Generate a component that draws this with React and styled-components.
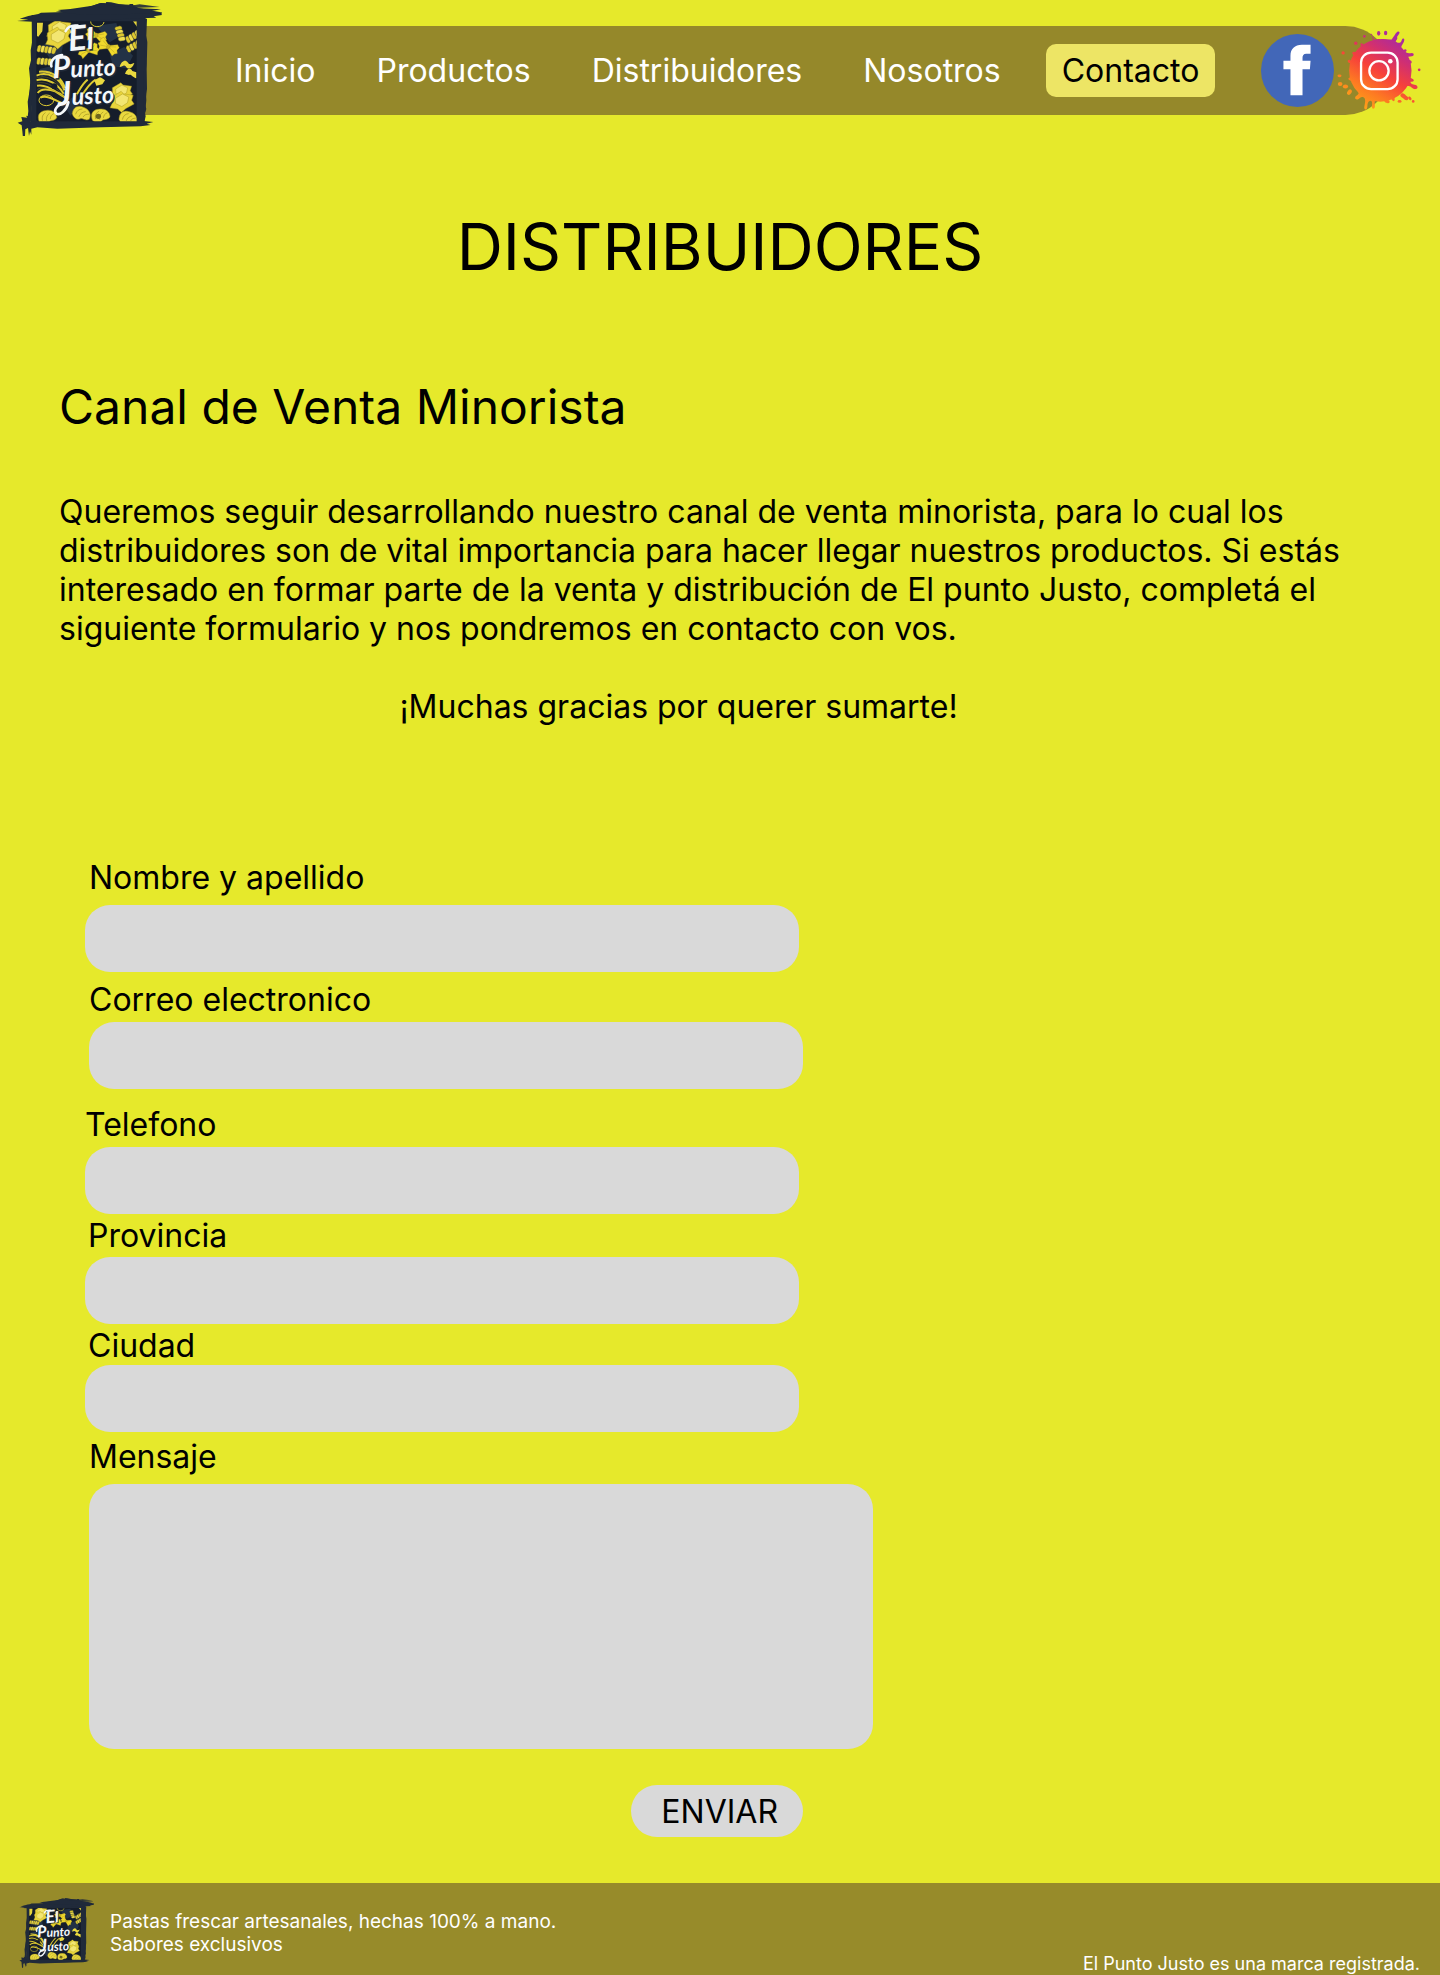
import React from "react";
import styled, { createGlobalStyle } from "styled-components";

const GlobalStyle = createGlobalStyle`
  *, *::before, *::after { box-sizing: border-box; }
  body {
    margin: 0;
    background: #e6e92b;
    color: #000;
    font-family: Inter, "Liberation Sans", sans-serif;
    font-size: 32px;
    line-height: 39px;
  }
`;

const Header = styled.header`
  position: relative;
  padding: 26px 50px 0 100px;
`;

const LogoLink = styled.a`
  position: absolute;
  top: 2px;
  left: 17px;
  z-index: 1;
  display: block;
`;

const LogoSvg = styled.svg`
  display: block;
  width: ${(p) => p.$width}px;
  height: auto;
`;

const Bar = styled.div`
  display: flex;
  align-items: center;
  justify-content: space-between;
  height: 89px;
  padding-left: 135px;
  background: #95882a;
  border-radius: 0 45px 45px 0;
`;

const Nav = styled.nav`
  display: flex;
  align-items: center;
  gap: 61px;
`;

const NavLink = styled.a`
  color: #fff;
  text-decoration: none;
`;

const ActiveLink = styled(NavLink)`
  margin-left: -16px;
  padding: 7px 16px;
  border-radius: 10px;
  background: #ede565;
  color: #000;
`;

const Social = styled.div`
  display: flex;
  align-items: center;
  gap: 3px;
  margin-right: -31px;

  a, svg { display: block; }
`;

const Main = styled.main`
  padding: 93px 90px 46px 59px;
`;

const Title = styled.h1`
  margin: 0;
  padding-left: 31px;
  font-size: 64px;
  font-weight: 400;
  line-height: 77px;
  text-align: center;
`;

const Subtitle = styled.h2`
  margin: 93px 0 56px;
  font-size: 48px;
  font-weight: 400;
  line-height: 58px;
`;

const Text = styled.p`
  margin: 0 0 39px;
`;

const Thanks = styled(Text)`
  padding-right: 52px;
  margin-bottom: 132px;
  text-align: center;
`;

const Form = styled.form`
  display: flex;
  flex-direction: column;
  width: 100%;
  max-width: 814px;
  padding-left: 26px;
`;

const Field = styled.div`
  display: flex;
  flex-direction: column;
  gap: ${(p) => p.$gap}px;
  margin-bottom: ${(p) => p.$after}px;
  padding-left: ${(p) => (p.$inset ? 4 : 0)}px;
`;

const Label = styled.label`
  padding-left: ${(p) => p.$indent}px;
`;

const Input = styled.input`
  width: 100%;
  max-width: 714px;
  height: 67px;
  padding: 0 24px;
  border: 0;
  border-radius: 25px;
  background: #d9d9d9;
  font: inherit;
`;

const Message = styled.textarea`
  display: block;
  width: 100%;
  height: 265px;
  padding: 16px 24px;
  border: 0;
  border-radius: 25px;
  background: #d9d9d9;
  font: inherit;
  resize: none;
`;

const Actions = styled.div`
  display: flex;
  justify-content: flex-end;
  padding-right: 70px;
`;

const Submit = styled.button`
  height: 52px;
  padding: 0 25px 0 30px;
  border: 0;
  border-radius: 26px;
  background: #d9d9d9;
  color: #000;
  font: inherit;
`;

const Footer = styled.footer`
  display: flex;
  justify-content: space-between;
  height: 92px;
  padding: 0 20px 0 19px;
  background: #978b2a;
  color: #fff;
`;

const Brand = styled.div`
  display: flex;
  align-items: center;
  gap: 16px;
  padding-top: 8px;
`;

const Slogan = styled.p`
  margin: 0;
  font-size: 19px;
  line-height: 23px;
`;

const Legal = styled.p`
  align-self: flex-end;
  margin: 0;
  font-size: 18px;
  line-height: 23px;
`;

const INK = "#202a3a";

function Ravioli({ x, y, s = 1 }) {
  return (
    <g transform={`translate(${x} ${y}) scale(${s})`} stroke="#a9981f" strokeWidth="1.5">
      <path d="M0-4l30-18 8 8 30 4-5 16 8 12-26 14-14 12-12-10-24-4 6-14z" fill="#e9d53c" />
      <path d="M12 0l22-14 20 10-4 18-18 12-20-10z" fill="#f3e671" />
    </g>
  );
}

function Fusilli({ x, y, r = 0, n = 5 }) {
  return (
    <g transform={`translate(${x} ${y}) rotate(${r})`}>
      {Array.from({ length: n }, (_, i) => (
        <path
          key={i}
          d={`M${i * 11} 2c4-8 12-6 14 1l-3 12c-3 6-11 5-12-1z`}
          fill={i % 2 ? "#f1df4d" : "#dcc72e"}
          stroke={INK}
          strokeWidth="1.5"
        />
      ))}
    </g>
  );
}

function Bow({ x, y, r = 0 }) {
  return (
    <g transform={`translate(${x} ${y}) rotate(${r})`} stroke="#9b8b1d" strokeWidth="1">
      <path d="M0-4l-24-16-7 8 4 8-6 7 8 7 2 10 23-14 22 15 4-9 7-5-5-8 3-10-8-6z" fill="#f0d92c" />
      <path d="M-22-10L0 0l22-9M-24 6L0 0l24 8" fill="none" />
      <ellipse rx="5" ry="7" fill="#c9b327" />
    </g>
  );
}

function Shell({ x, y, r = 0 }) {
  return (
    <g transform={`translate(${x} ${y}) rotate(${r})`} stroke="#8f801b" strokeWidth="1.5">
      <path d="M-26 12c-4-20 6-32 26-30 18 0 30 12 28 28-10 10-20 2-26 8-8 8-20 4-28-6z" fill="#ead93f" />
      <path d="M-16 10c0-12 4-18 14-22M-4 14c0-12 6-18 14-22M8 10c2-8 6-12 14-14" fill="none" />
    </g>
  );
}

function Logo({ width }) {
  return (
    <LogoSvg $width={width} viewBox="52 5 435 403" role="img" aria-label="El Punto Justo">
      <g fill={INK}>
        <path d="M96 44L436 42 439 90 437 140 440 190 437 240 440 300 433 374 300 379 180 378 92 372 95 320 89 280 92 240 97 150z" />
        <path d="M52 62l34-4-26-3 26-8 30-6 8-4 70-2-20-6 38-3 66-10 26-8 14 1 2-4 14 1 26 6 46 6 14 6 76 14-12 2 4 4-26 4 8 4-50 2-140 6-180 4z" />
        <path d="M168 34l92-12 40-13 14 0 26 8 46 4 4-10 10 0 2 12 82 4-32 6 22 5-100 4-120 2z" />
        <path d="M330 16l90 6 60-2-60-8-14 2-60-3z" opacity=".9" />
        <path d="M65 350l18 2-4-6 16 4-2 14 340-2 28 3-20 5 12 4-30 4-120 3-130 4-60-4-18 4v18l-4-10-3 14-3-24-8 4-1 20-6 6-2-20-2-18-12-8 14-4z" />
        <path d="M434 52l8 4-2 50 3 20-2 80 1 60-6 46 4 14-4 12 2 10-6 26z" />
        <path d="M100 110l-7 40 1 30-6 24 5 50-9 50 2 28-4 36 14-6z" />
      </g>
      <rect x="110" y="63" width="301" height="300" rx="6" fill="#151d2b" />
      <g fill="#27384d" opacity=".8">
        <path d="M128 140l30-36 34 20-8 42-34 8zM290 76l60-8 10 40-30 18zM330 160l44-20 26 26-20 38-40-6zM120 206l40-10-4 26-30 8zM190 310l30-20 16 30-24 26z" />
      </g>
      <svg x="110" y="63" width="301" height="300" viewBox="110 63 301 300">
        <Ravioli x={146} y={78} />
        <Ravioli x={143} y={102} />
        <Bow x={290} y={105} r={12} />
        <Bow x={326} y={139} r={25} />
        <Bow x={266} y={150} r={-16} />
        <Fusilli x={114} y={136} r={8} />
        <Fusilli x={112} y={174} r={4} n={4} />
        <Fusilli x={362} y={76} r={72} n={4} />
        <Fusilli x={376} y={114} r={-32} n={4} />
        <Fusilli x={378} y={142} r={-30} n={4} />
        <path d="M112 67h18l-2 26-12 16-4-2zM400 63h12v16z" fill="#e5d53c" />
        <path d="M273 63a20 15 0 0040 2" fill="none" stroke="#d8c831" strokeWidth="3" />
        <path d="M360 200c4-18 18-24 24-14s12 4 20 2c-6 18-20 22-26 10-6-6-10 2-18 2zM376 220c6-16 16-20 22-8l12 4v18c-12-4-16-14-22-10z" fill="#ead93f" />
        <g fill="none" stroke="#ddca32" strokeWidth="6">
          <path d="M110 226c34-14 72 6 84 44M110 240c34-10 66 14 82 40M112 256c30-6 56 20 82 34M114 278c14-20 60-10 88 20M118 214c40-4 70 20 78 50M122 292c20-10 50 10 76 22" />
          <path d="M230 284c12-20 20-36 34-46M244 290c12-20 24-40 44-52" />
          <ellipse cx="140" cy="300" rx="22" ry="16" strokeWidth="3" />
        </g>
        <g fill="none" stroke="#93841d" strokeWidth="1.2">
          <path d="M110 233c34-12 69 10 83 42M111 248c32-8 61 17 82 37M113 267c22-13 58 5 85 27" />
        </g>
        <circle cx="164" cy="258" r="9" fill="#151d2b" />
        <Ravioli x={338} y={266} s={0.85} />
        <Ravioli x={336} y={294} s={0.95} />
        <path d="M284 240l18-10 14 10-8 12-18 4z" fill="#ead93f" />
        <Shell x={142} y={348} r={-12} />
        <Shell x={246} y={338} r={20} />
        <Shell x={302} y={344} r={-8} />
        <Shell x={386} y={352} r={14} />
        <circle cx="296" cy="348" r="8" fill="#6d651d" />
      </svg>
      <g
        fontFamily="Lato, 'Liberation Sans', sans-serif"
        fontStyle="italic"
        fontWeight="700"
        fontSize="70"
      >
        <g fill={INK} transform="translate(4 4)">
          <text x="208" y="152" transform="rotate(-5 208 152)"><tspan fontSize="104">E</tspan><tspan fontSize="88">l</tspan></text>
          <text x="160" y="234" transform="rotate(-3 160 234)"><tspan fontSize="92">P</tspan>unto</text>
          <text x="176" y="316" transform="rotate(-3 176 316)"><tspan fontSize="100">J</tspan>usto</text>
        </g>
        <g fill="#f4f8fb">
          <text x="208" y="152" transform="rotate(-5 208 152)"><tspan fontSize="104">E</tspan><tspan fontSize="88">l</tspan></text>
          <text x="160" y="234" transform="rotate(-3 160 234)"><tspan fontSize="92">P</tspan>unto</text>
          <text x="176" y="316" transform="rotate(-3 176 316)"><tspan fontSize="100">J</tspan>usto</text>
        </g>
      </g>
      <path d="M198 92c6-12 20-18 36-16M155 198c-4-18 12-32 32-34M206 306c-6 26-26 40-36 34-10-10 2-26 26-34" fill="none" stroke="#f4f8fb" strokeWidth="8" strokeLinecap="round" />
    </LogoSvg>
  );
}

function FacebookIcon() {
  return (
    <svg width="73" height="73" viewBox="125 72 218 218" aria-hidden="true">
      <circle cx="234" cy="181" r="109" fill="#4267b8" />
      <path d="M213 255V177H192V152H213V137C213 116 226 104 247 104H273V131H260C252 131 249 136 249 143V152H273L271 177H249V255Z" fill="#fff" />
    </svg>
  );
}

function InstagramIcon() {
  return (
    <svg width="84" height="83" viewBox="352 55 252 250" aria-hidden="true">
      <defs>
        <linearGradient id="splash" x1="410" y1="290" x2="540" y2="75" gradientUnits="userSpaceOnUse">
          <stop offset="0" stopColor="#ffa617" />
          <stop offset=".25" stopColor="#fd7a22" />
          <stop offset=".5" stopColor="#f7413a" />
          <stop offset=".75" stopColor="#d02f72" />
          <stop offset="1" stopColor="#a32aa8" />
        </linearGradient>
      </defs>
      <g fill="url(#splash)">
        <circle cx="482" cy="180" r="94" />
        <path d="M452 70c5-3 7 3 6 9l2 12c8-5 14-7 22-5 14-2 26 2 36 0 5-6 8-10 13-8 5 3 1 9-3 14 6 6 11 6 16 2l4-9c7-4 8 4 4 11-5 9-9 13-5 18l13 12c7 4 12 2 17 1 8 1 7 9 0 10-8 1-14 1-14 6 2 5 8 4 12 8 5 7-2 11-8 7-7-3-10 1-8 8l8 26c4 10 8 12 14 14 5 5-1 9-7 7-3 5 3 8 11 10 11 2 12 11 4 13-9 2-13-8-22-9-8-1-12 4-16 11l-16 14c-8 5-11 8-10 14 2 8-6 8-8 2-2-5-7-2-11 0-4 3-1 9-6 9s-4-6-10-6c-10 1-18-2-24 0-3 7 2 17-2 23-5 4-9-2-7-10 1-9 0-13-6-13-6 2-8 8-8 18-1 12-12 11-9-1 3-14 4-23-2-27-8-5-12 4-19 6-8 1-9-7-3-11 6-3 9-7 5-14-4-10-9-12-10-20-5-10-8-11-14-12-8-3-6-9 1-9 7-1 8-5 6-13 0-12 1-18 1-25-1-6-9-4-14-8-4-5 2-9 7-6 7 3 10 1 13-6 2-6-3-8-7-13-2-7 5-8 10-4 6 3 9-3 14-8 5-4 3-9 0-15-1-6 6-7 9-1 3 7 8 8 14 5l14-6c6-4 2-13 3-21z" />
        <path d="M538 63c5 2-1 9-6 16-5 8-9 13-13 10s2-9 6-15c4-7 8-13 13-11z" />
        <path d="M545 250c6-4 10 2 15 6 7 3 9 10 4 13-7 3-11-5-17-8-6-4-6-8-2-11z" />
        <ellipse cx="477" cy="68" rx="5" ry="7" />
        <ellipse cx="498" cy="67" rx="5" ry="7" />
        <circle cx="408" cy="98" r="5" />
        <circle cx="370" cy="127" r="5" />
        <circle cx="557" cy="120" r="4" />
        <circle cx="599" cy="178" r="4" />
        <ellipse cx="359" cy="196" rx="6" ry="4" />
        <ellipse cx="361" cy="221" rx="7" ry="6" />
        <ellipse cx="377" cy="228" rx="8" ry="6" />
        <ellipse cx="389" cy="245" rx="6" ry="9" transform="rotate(35 389 245)" />
        <circle cx="434" cy="77" r="4" />
        <circle cx="505" cy="274" r="5" />
        <ellipse cx="540" cy="273" rx="6" ry="4" />
        <ellipse cx="571" cy="264" rx="4" ry="6" transform="rotate(-40 571 264)" />
        <circle cx="581" cy="273" r="4" />
      </g>
      <rect x="424" y="126" width="110" height="110" rx="30" fill="none" stroke="#fff" strokeWidth="7" />
      <circle cx="478" cy="181" r="29" fill="none" stroke="#fff" strokeWidth="7" />
      <circle cx="512" cy="152" r="7" fill="#fff" />
    </svg>
  );
}

const links = ["Inicio", "Productos", "Distribuidores", "Nosotros"];

const fields = [
  { id: "nombre", label: "Nombre y apellido", type: "text", gap: 8, after: 8, indent: 4 },
  { id: "correo", label: "Correo electronico", type: "email", gap: 3, after: 16, indent: 0, inset: true },
  { id: "telefono", label: "Telefono", type: "tel", gap: 3, after: 2, indent: 0 },
  { id: "provincia", label: "Provincia", type: "text", gap: 2, after: 2, indent: 3 },
  { id: "ciudad", label: "Ciudad", type: "text", gap: 0, after: 5, indent: 3 },
];

export default function App() {
  return (
    <>
      <GlobalStyle />
      <Header>
        <LogoLink href="#inicio">
          <Logo width={145} />
        </LogoLink>
        <Bar>
          <Nav aria-label="Principal">
            {links.map((name) => (
              <NavLink key={name} href={`#${name.toLowerCase()}`}>{name}</NavLink>
            ))}
            <ActiveLink href="#contacto" aria-current="page">Contacto</ActiveLink>
          </Nav>
          <Social>
            <a href="#facebook" aria-label="Facebook"><FacebookIcon /></a>
            <a href="#instagram" aria-label="Instagram"><InstagramIcon /></a>
          </Social>
        </Bar>
      </Header>
      <Main>
        <Title>DISTRIBUIDORES</Title>
        <Subtitle>Canal de Venta Minorista</Subtitle>
        <Text>
          Queremos seguir desarrollando nuestro canal de venta minorista, para lo cual los
          distribuidores son de vital importancia para hacer llegar nuestros productos. Si estás
          interesado en formar parte de la venta y distribución de El punto Justo, completá el
          siguiente formulario y nos pondremos en contacto con vos.
        </Text>
        <Thanks>¡Muchas gracias por querer sumarte!</Thanks>
        <Form onSubmit={(e) => e.preventDefault()}>
          {fields.map((f) => (
            <Field key={f.id} $gap={f.gap} $after={f.after} $inset={f.inset}>
              <Label htmlFor={f.id} $indent={f.indent}>{f.label}</Label>
              <Input id={f.id} name={f.id} type={f.type} />
            </Field>
          ))}
          <Field $gap={8} $after={36} $inset>
            <Label htmlFor="mensaje" $indent={0}>Mensaje</Label>
            <Message id="mensaje" name="mensaje" />
          </Field>
          <Actions>
            <Submit type="submit">ENVIAR</Submit>
          </Actions>
        </Form>
      </Main>
      <Footer>
        <Brand>
          <Logo width={75} />
          <Slogan>
            Pastas frescar artesanales, hechas 100% a mano.
            <br />
            Sabores exclusivos
          </Slogan>
        </Brand>
        <Legal>El Punto Justo es una marca registrada.</Legal>
      </Footer>
    </>
  );
}
